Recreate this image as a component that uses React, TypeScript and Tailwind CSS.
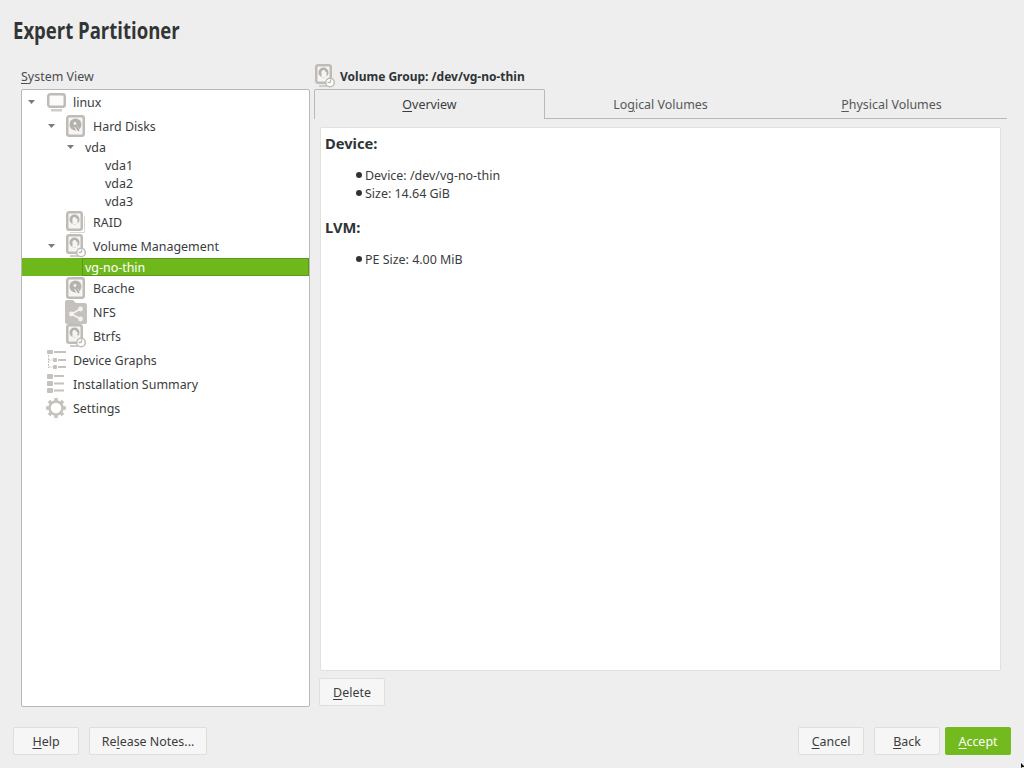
import React from 'react';

const Ul = ({ children }: { children: React.ReactNode }) => (
  <span className="underline underline-offset-2 decoration-1">{children}</span>
);

const Arrow = () => (
  <svg width="7" height="4" viewBox="0 0 7 4" className="block">
    <path d="M0 0h7L3.500 4z" fill="#7b7b7b" />
  </svg>
);

const DiskIcon = () => (
  <svg width="20" height="24" viewBox="0 0 20 24" className="block">
    <rect x="1.250" y="2.250" width="16.500" height="19.500" rx="2" fill="#f6f5f4" stroke="#bfbcb7" strokeWidth="2.500" />
    <circle cx="9.500" cy="10.500" r="6" fill="#b5b2ae" />
    <circle cx="9" cy="9.500" r="1.400" fill="#f6f5f4" />
    <path d="M9.500 12.500l4 6" stroke="#f6f5f4" strokeWidth="3" />
    <path d="M9.500 12l3.500 5" stroke="#a8a5a1" strokeWidth="1.500" />
  </svg>
);

const RaidIcon = () => (
  <svg width="20" height="24" viewBox="0 0 20 24" className="block">
    <path d="M4 22.500h14.500V6" fill="none" stroke="#d8d6d2" strokeWidth="1" />
    <rect x="1.250" y="2.250" width="14.500" height="17.500" rx="2" fill="#f6f5f4" stroke="#bfbcb7" strokeWidth="2.500" />
    <circle cx="8.500" cy="9.500" r="5" fill="#b5b2ae" />
    <circle cx="8.500" cy="9" r="2" fill="#f6f5f4" />
    <rect x="6.500" y="9" width="5" height="5" fill="#f6f5f4" />
  </svg>
);

const VolumeIcon = () => (
  <svg width="20" height="24" viewBox="0 0 20 24" className="block">
    <rect x="4" y="21" width="8" height="2" fill="#d0cdc9" />
    <rect x="1.250" y="1.250" width="14.500" height="17.500" rx="2" fill="#f6f5f4" stroke="#bfbcb7" strokeWidth="2.500" />
    <circle cx="8.500" cy="8.500" r="5" fill="#b5b2ae" />
    <circle cx="8.500" cy="8" r="2" fill="#f6f5f4" />
    <rect x="6.500" y="8" width="5" height="5" fill="#f6f5f4" />
    <circle cx="15" cy="18.500" r="4.300" fill="#fff" stroke="#bfbcb7" strokeWidth="1.500" />
    <path d="M15.500 18.500v-3M15.500 18.500h-3" stroke="#bfbcb7" strokeWidth="1.400" />
  </svg>
);

const MonitorIcon = () => (
  <svg width="20" height="20" viewBox="0 0 20 20" className="block">
    <rect x="2.250" y="2.250" width="16.500" height="12.500" rx="2" fill="#fbfbfa" stroke="#bfbcb7" strokeWidth="2.500" />
    <rect x="5" y="17" width="11" height="2.500" fill="#d0cdc9" />
  </svg>
);

const NfsIcon = () => (
  <svg width="22" height="24" viewBox="0 0 22 24" className="block -ml-[1px]">
    <path d="M0 2a2 2 0 0 1 2-2h6l3 3h9a2 2 0 0 1 2 2v17a2 2 0 0 1-2 2H2a2 2 0 0 1-2-2z" fill="#c5c2bd" />
    <path d="M6.500 14l9-5M6.500 14l9 5" stroke="#f4f3f2" strokeWidth="1.500" />
    <circle cx="6.500" cy="14" r="2.400" fill="#f4f3f2" />
    <circle cx="15.500" cy="9" r="2.400" fill="#f4f3f2" />
    <circle cx="15.500" cy="19" r="2.400" fill="#f4f3f2" />
  </svg>
);

const GraphIcon = () => (
  <svg width="20" height="20" viewBox="0 0 20 20" className="block">
    <rect x="1" y="0" width="6" height="4" rx="1" fill="#c5c2bd" />
    <rect x="8" y="1" width="12" height="2" fill="#c5c2bd" />
    <path d="M2.500 5v13M2.500 10h4M2.500 17h4" stroke="#c5c2bd" strokeWidth="1" strokeDasharray="2 1" />
    <rect x="7" y="8" width="4" height="4" rx="1" fill="#c5c2bd" />
    <rect x="12" y="9" width="8" height="2" fill="#c5c2bd" />
    <rect x="7" y="15" width="4" height="4" rx="1" fill="#c5c2bd" />
    <rect x="12" y="16" width="8" height="2" fill="#c5c2bd" />
  </svg>
);

const SummaryIcon = () => (
  <svg width="18" height="20" viewBox="0 0 18 20" className="block ml-[1px]">
    <rect x="0" y="0" width="6" height="5" rx="1" fill="#c5c2bd" />
    <rect x="7" y="1" width="10" height="2" fill="#c5c2bd" />
    <rect x="0" y="7" width="6" height="5" rx="1" fill="#c5c2bd" />
    <rect x="7" y="8.500" width="10" height="2" fill="#c5c2bd" />
    <rect x="0" y="14" width="6" height="5" rx="1" fill="#c5c2bd" />
    <rect x="7" y="15.500" width="10" height="2" fill="#c5c2bd" />
  </svg>
);

const GearIcon = () => (
  <svg width="20" height="20" viewBox="0 0 20 20" className="block">
    <circle cx="10" cy="10" r="6.500" fill="none" stroke="#c5c2bd" strokeWidth="2.500" />
    <g stroke="#c5c2bd" strokeWidth="3.500">
      <path d="M10 0v3M10 17v3M0 10h3M17 10h3M3 3l2 2M15 15l2 2M17 3l-2 2M5 15l-2 2" />
    </g>
  </svg>
);

type RowProps = {
  pad: string;
  arrow?: boolean;
  icon?: React.ReactNode;
  label: string;
  tall?: boolean;
};

// pad is the left padding class of the row; arrow cell and icon cell are fixed width
const Row = ({ pad, arrow, icon, label, tall = true }: RowProps) => (
  <div className={`flex items-center ${tall ? 'h-6' : 'h-[18px]'} ${pad}`}>
    <div className="w-[20px] shrink-0 flex items-center pl-[2px]">{arrow && <Arrow />}</div>
    {icon && <div className="w-[27px] shrink-0 flex items-center">{icon}</div>}
    <span className="pt-[2px]">{label}</span>
  </div>
);

const Button = ({ children, className = '' }: { children: React.ReactNode; className?: string }) => (
  <div className={`h-7 pt-[2px] flex items-center justify-center rounded-[2px] border border-[#d8e2d6] bg-[#f6f6f6] text-[#3c3c3c] ${className}`}>
    {children}
  </div>
);

const Bullet = ({ children }: { children: React.ReactNode }) => (
  <div className="flex items-center h-[18px] pl-[31px]">
    <span className="w-[6px] h-[6px] rounded-full bg-[#2e3436] mr-[3px]" />
    <span className="pt-[2px]">{children}</span>
  </div>
);

export default function App() {
  return (
    <div className="relative w-[1024px] h-[768px] overflow-hidden bg-[#eeeeee] text-[12.450px] leading-[18px] text-[#3a3d3e] flex flex-col" style={{ fontFamily: '"Noto Sans", sans-serif' }}>
      <div className="h-[60px] pl-[13px] pt-[13px] shrink-0">
        <h1 className="text-[24px] leading-[34px] font-bold text-[#333535] origin-left scale-x-[0.772] whitespace-nowrap" style={{ fontFamily: '"Open Sans", sans-serif' }}>
          Expert Partitioner
        </h1>
      </div>

      <div className="flex pl-[21px] pr-[17px] h-[647px] shrink-0">
        <div className="w-[289px] flex flex-col shrink-0">
          <div className="h-[29px] pt-[8px] text-[#4a4d4e]">
            <Ul>S</Ul>ystem View
          </div>
          <div className="h-[618px] bg-white border border-[#b9b9b7] rounded-[2px]">
            <Row pad="pl-[4px]" arrow icon={<MonitorIcon />} label="linux" />
            <Row pad="pl-[24px]" arrow icon={<DiskIcon />} label="Hard Disks" />
            <Row pad="pl-[43px]" arrow label="vda" tall={false} />
            <Row pad="pl-[63px]" label="vda1" tall={false} />
            <Row pad="pl-[63px]" label="vda2" tall={false} />
            <Row pad="pl-[63px]" label="vda3" tall={false} />
            <Row pad="pl-[24px]" icon={<RaidIcon />} label="RAID" />
            <Row pad="pl-[24px]" arrow icon={<VolumeIcon />} label="Volume Management" />
            <div className="h-[18px] bg-[#6fb81c] pl-[60px] text-white">
              <div className="h-[18px] border border-[#5b9a14] pl-[2px] leading-[17px]">vg-no-thin</div>
            </div>
            <Row pad="pl-[24px]" icon={<DiskIcon />} label="Bcache" />
            <Row pad="pl-[24px]" icon={<NfsIcon />} label="NFS" />
            <Row pad="pl-[24px]" icon={<VolumeIcon />} label="Btrfs" />
            <Row pad="pl-[4px]" icon={<GraphIcon />} label="Device Graphs" />
            <Row pad="pl-[4px]" icon={<SummaryIcon />} label="Installation Summary" />
            <Row pad="pl-[4px]" icon={<GearIcon />} label="Settings" />
          </div>
        </div>

        <div className="ml-[4px] flex-1 flex flex-col min-w-0">
          <div className="h-[29px] flex items-center pl-[1px] pt-[3px]">
            <VolumeIcon />
            <span className="ml-[5px] pt-[2px] font-bold text-[12px] text-[#2e3436]">Volume Group: /dev/vg-no-thin</span>
          </div>
          <div className="flex h-[30px]">
            <div className="w-[231px] pt-[1px] border border-b-0 border-[#b9b9b7] rounded-t-[2px] flex items-center justify-center">
              <span><Ul>O</Ul>verview</span>
            </div>
            <div className="w-[231px] pt-[2px] border-b border-[#b9b9b7] flex items-center justify-center text-[#55585a]">
              <span>Lo<Ul>g</Ul>ical Volumes</span>
            </div>
            <div className="w-[231px] pt-[2px] border-b border-[#b9b9b7] flex items-center justify-center text-[#55585a]">
              <span><Ul>P</Ul>hysical Volumes</span>
            </div>
          </div>
          <div className="ml-[6px] mr-[6px] mt-[8px] h-[544px] bg-white border border-[#dfe3dc] rounded-[2px] pl-[4px] pt-[5px]">
            <h2 className="font-bold text-[14.700px] leading-[20px] text-[#2e3436]">Device:</h2>
            <div className="mt-[13px]">
              <Bullet>Device: /dev/vg-no-thin</Bullet>
              <Bullet>Size: 14.64 GiB</Bullet>
            </div>
            <h2 className="mt-[15px] font-bold text-[14.700px] leading-[20px] text-[#2e3436]">LVM:</h2>
            <div className="mt-[13px]">
              <Bullet>PE Size: 4.00 MiB</Bullet>
            </div>
          </div>
          <div className="mt-[7px] ml-[5px]">
            <Button className="w-[66px]"><span><Ul>D</Ul>elete</span></Button>
          </div>
        </div>
      </div>

      <div className="flex items-start pl-[13px] pr-[13px] pt-[20px]">
        <Button className="w-[66px]"><span><Ul>H</Ul>elp</span></Button>
        <Button className="w-[118px] ml-[10px]"><span>Re<Ul>l</Ul>ease Notes...</span></Button>
        <div className="flex-1" />
        <Button className="w-[66px]"><span><Ul>C</Ul>ancel</span></Button>
        <Button className="w-[66px] ml-[10px]"><span><Ul>B</Ul>ack</span></Button>
        <div className="w-[66px] h-7 pt-[2px] ml-[5px] flex items-center justify-center rounded-[2px] bg-[#73ba1f] text-white">
          <span><Ul>A</Ul>ccept</span>
        </div>
      </div>

      <svg width="4" height="5" viewBox="0 0 4 5" className="absolute left-[1021px] top-[763px]">
        <path d="M0 0l4 4H1.500L0 5z" fill="#111" />
      </svg>
    </div>
  );
}
